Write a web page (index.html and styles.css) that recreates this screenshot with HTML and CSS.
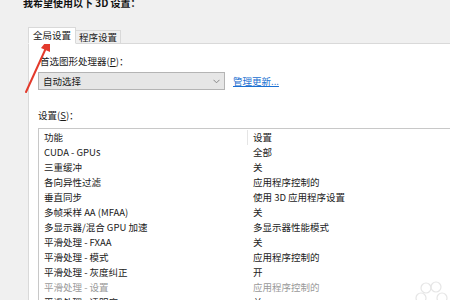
FILE: index.html
```html
<!DOCTYPE html>
<html lang="zh-CN">
<head>
<meta charset="utf-8">
<link rel="stylesheet" href="styles.css">
</head>
<body>
<div class="title">我希望使用以下 3D 设置：</div>
<div class="tabs">
  <div class="tab active">全局设置</div>
  <div class="tab">程序设置</div>
</div>
<div class="panel">
  <div class="label">首选图形处理器(<u>P</u>)：</div>
  <div class="combo-row">
    <div class="combo">
      <span>自动选择</span>
      <svg class="chev" width="7" height="5" viewBox="0 0 7 5"><path d="M0.5 0.8 L3.5 3.8 L6.5 0.8" fill="none" stroke="#888" stroke-width="1"/></svg>
    </div>
    <a class="link">管理更新...</a>
  </div>
  <div class="label label-s">设置(<u>S</u>)：</div>
  <div class="list">
    <div class="row head"><span class="c1">功能</span><span class="c2">设置</span></div>
    <div class="row"><span class="c1">CUDA - GPUs</span><span class="c2">全部</span></div>
    <div class="row"><span class="c1">三重缓冲</span><span class="c2">关</span></div>
    <div class="row"><span class="c1">各向异性过滤</span><span class="c2">应用程序控制的</span></div>
    <div class="row"><span class="c1">垂直同步</span><span class="c2">使用 3D 应用程序设置</span></div>
    <div class="row"><span class="c1">多帧采样 AA (MFAA)</span><span class="c2">关</span></div>
    <div class="row"><span class="c1">多显示器/混合 GPU 加速</span><span class="c2">多显示器性能模式</span></div>
    <div class="row"><span class="c1">平滑处理 - FXAA</span><span class="c2">关</span></div>
    <div class="row"><span class="c1">平滑处理 - 模式</span><span class="c2">应用程序控制的</span></div>
    <div class="row"><span class="c1">平滑处理 - 灰度纠正</span><span class="c2">开</span></div>
    <div class="row dim"><span class="c1">平滑处理 - 设置</span><span class="c2">应用程序控制的</span></div>
    <div class="row"><span class="c1">平滑处理 - 透明度</span><span class="c2">关</span></div>
  </div>
</div>
<svg class="arrow" width="60" height="80" viewBox="0 0 60 80">
  <path d="M2 66 L22 22" stroke="#e33a2c" stroke-width="2" stroke-linecap="round" fill="none"/>
  <path d="M26 11 L17 22 L26 26 Z" fill="#e33a2c"/>
</svg>
<svg class="mark" width="50" height="30" viewBox="0 0 50 30">
  <g fill="none" stroke="#e6e6e6" stroke-width="1.2">
    <circle cx="22" cy="10" r="5"/>
    <circle cx="32" cy="9" r="5"/>
    <circle cx="17" cy="20" r="5"/>
    <circle cx="38" cy="20" r="5"/>
    <rect x="2" y="24" width="10" height="6"/>
  </g>
</svg>
</body>
</html>
```
FILE: styles.css
```css
html, body {
  margin: 0;
  padding: 0;
}
body {
  width: 450px;
  height: 300px;
  overflow: hidden;
  background: #f0f0f0;
  font-family: "Noto Sans CJK SC", "Microsoft YaHei", sans-serif;
  font-size: 9.5px;
  color: #1a1a1a;
  position: relative;
}
.title {
  font-weight: bold;
  font-size: 10px;
  line-height: 14px;
  margin-top: -4px;
  padding-left: 23px;
  color: #111;
}
.tabs {
  display: flex;
  align-items: flex-end;
  margin-top: 17px;
  margin-left: 28px;
  height: 16px;
  position: relative;
  z-index: 1;
}
.tab {
  height: 12px;
  line-height: 12px;
  padding: 0 3px;
  border: 1px solid #d9d9d9;
  border-bottom: none;
  background: #f0f0f0;
  color: #1a1a1a;
  margin-left: -1px;
}
.tab.active {
  height: 15px;
  line-height: 15px;
  background: #fff;
  margin-left: 0;
  padding: 0 4px;
  border-bottom: 1px solid #fff;
  margin-bottom: -1px;
}
.panel {
  margin-left: 28px;
  background: #fff;
  border-top: 1px solid #d9d9d9;
  border-left: 1px solid #d9d9d9;
  padding: 10px 0 0 9px;
  height: 300px;
}
.label {
  line-height: 15px;
  padding-left: 2px;
}
.combo-row {
  display: flex;
  align-items: center;
  margin-top: 3px;
}
.combo {
  height: 16px;
  border: 1px solid #b4b4b4;
  background: #e6e6e6;
  display: flex;
  align-items: center;
  justify-content: space-between;
  padding: 0 4px 0 4px;
  box-sizing: content-box;
  width: 177px;
}
.chev {
  display: block;
}
.link {
  margin-left: 8px;
  color: #1a6fd1;
  text-decoration: underline;
  line-height: 15px;
}
.label-s {
  margin-top: 18px;
  padding-left: 0;
}
.list {
  margin-top: 5px;
  border-top: 1px solid #c8c8c8;
  border-left: 1px solid #c8c8c8;
  padding-top: 1px;
}
.row {
  display: flex;
  height: 15px;
  line-height: 15px;
  white-space: nowrap;
}
.c1 {
  width: 203px;
  padding-left: 5px;
}
.c2 {
  padding-left: 6px;
}
.head .c2 {
  border-left: 1px solid #e5e5e5;
  padding-left: 5px;
}
.dim {
  color: #9a9a9a;
}
.arrow {
  position: absolute;
  left: 24px;
  top: 26px;
}
.mark {
  position: absolute;
  left: 404px;
  top: 278px;
}
```
